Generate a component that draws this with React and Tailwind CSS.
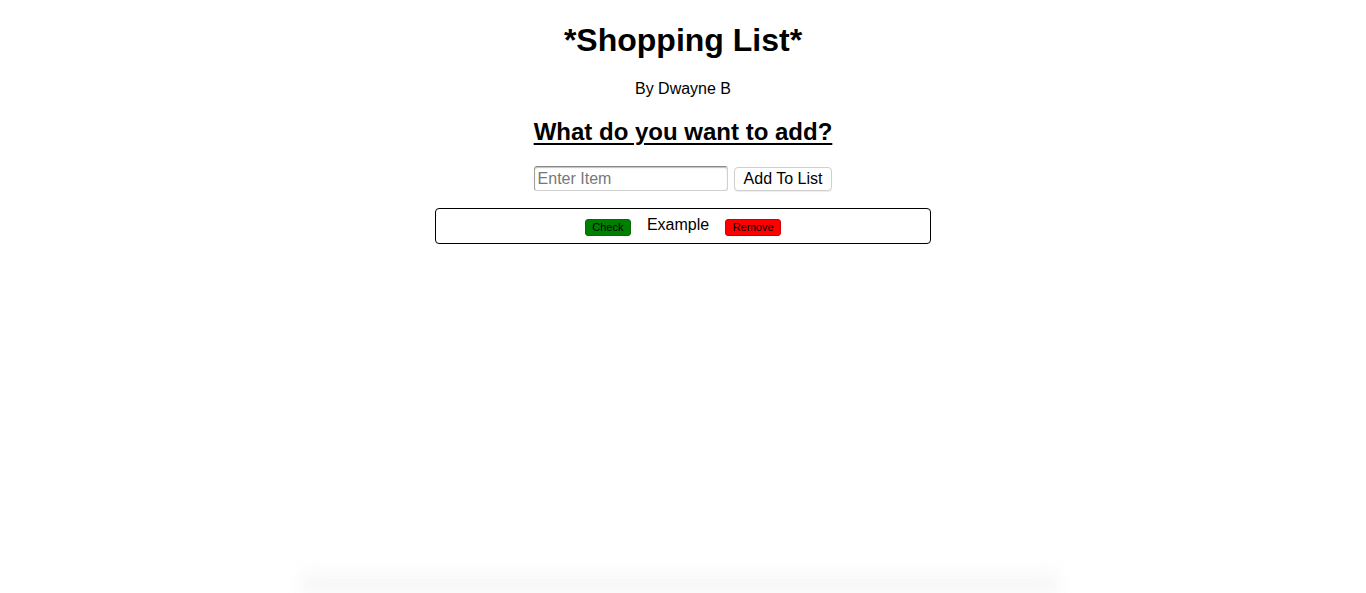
import React, { useState } from "react";

const App = () => {
  const [items] = useState(["Example"]);

  return (
    <div className="min-h-[593px] bg-white text-black font-['Liberation_Sans',Arial,sans-serif] text-center">
      {/* Header */}
      <h1 className="pt-[22px] text-[32px] leading-[37px] font-bold">*Shopping List*</h1>
      <p className="mt-[21px] text-base leading-[18px]">By Dwayne B</p>
      <h2 className="mt-[20px] text-2xl leading-[28px] font-bold underline underline-offset-[3px] decoration-2">
        What do you want to add?
      </h2>

      {/* Add form */}
      <div className="mt-[20px] flex justify-center items-center gap-[6px]">
        <input
          type="text"
          placeholder="Enter Item"
          className="w-[194px] h-[25px] px-[3px] text-base border border-[#d0d0d0] border-t-[#8a8a8a] border-l-[#a0a0a0] rounded-[3px] shadow-[inset_0_1px_1px_rgba(0,0,0,0.25)] placeholder:text-[#777] outline-none"
        />
        <button className="h-[24px] px-[9px] text-base leading-none bg-white border border-[#cfcfcf] rounded-[4px] shadow-[0_1px_1px_rgba(0,0,0,0.08)]">
          Add To List
        </button>
      </div>

      {/* List */}
      <div className="mt-[17px] flex flex-col items-center">
        {items.map((item) => (
          <div
            key={item}
            className="w-[496px] h-[36px] border border-black rounded-[4px] flex justify-center items-center gap-[16px]"
          >
            <button className="mt-[2px] w-[46px] h-[17px] bg-[#008000] rounded-[3px] border border-[#0a6a0a] text-[11px] leading-none">
              Check
            </button>
            <span className="text-base leading-none -mt-[2px]">{item}</span>
            <button className="mt-[2px] w-[56px] h-[17px] bg-[#ff0000] rounded-[3px] border border-[#d40000] text-[11px] leading-none">
              Remove
            </button>
          </div>
        ))}
      </div>

      {/* window shadow at the bottom edge */}
      <div className="pointer-events-none fixed bottom-0 left-[300px] w-[760px] h-[30px] bg-gradient-to-b from-transparent to-[#eeeeee] blur-[8px] opacity-70"></div>
    </div>
  );
};

export default App;
